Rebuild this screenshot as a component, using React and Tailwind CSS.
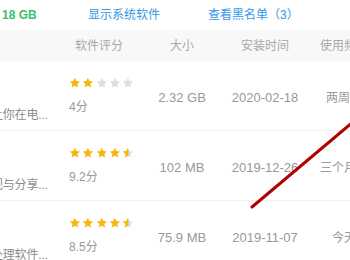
import React from "react";

const ORANGE = "#f8b60f";
const GRAY = "#dedede";
const STAR = "M12 1.5l3.1 6.6 7.2.9-5.3 5 1.4 7.1L12 17.6l-6.4 3.5 1.4-7.1-5.3-5 7.2-.9z";

function Star({ kind, id }) {
  if (kind === "half") {
    return (
      <svg width="12" height="12" viewBox="0 0 24 24">
        <defs>
          <clipPath id={id}>
            <rect x="0" y="0" width="13" height="24" />
          </clipPath>
        </defs>
        <path d={STAR} fill={GRAY} />
        <path d={STAR} fill={ORANGE} clipPath={`url(#${id})`} />
      </svg>
    );
  }
  return (
    <svg width="12" height="12" viewBox="0 0 24 24">
      <path d={STAR} fill={kind === "full" ? ORANGE : GRAY} />
    </svg>
  );
}

function Stars({ value, rid }) {
  const items = [];
  for (let i = 0; i < 5; i++) {
    const v = value - i;
    const kind = v >= 1 ? "full" : v >= 0.5 ? "half" : "empty";
    items.push(<Star key={i} kind={kind} id={`${rid}-${i}`} />);
  }
  return <div className="flex gap-[1.5px] h-[12px]">{items}</div>;
}

const rows = [
  { desc: "让你在电...", stars: 2, score: "4分", size: "2.32 GB", date: "2020-02-18", use: "两周前" },
  { desc: "视与分享...", stars: 4.5, score: "9.2分", size: "102 MB", date: "2019-12-26", use: "三个月前" },
  { desc: "处理软件...", stars: 4.5, score: "8.5分", size: "75.9 MB", date: "2019-11-07", use: "今天" },
];

export default function App() {
  return (
    <div
      className="relative w-[350px] h-[260px] overflow-hidden bg-white"
      style={{ fontFamily: '"Liberation Sans", "Noto Sans CJK SC", sans-serif' }}
    >
      <div className="h-[30px] flex items-center text-[12px] whitespace-nowrap">
        <span className="ml-[2px] w-[86px] font-bold text-[#3cbf6a]">18 GB</span>
        <span className="w-[120px] text-[#3598e8]">显示系统软件</span>
        <span className="text-[#3598e8]">查看黑名单（3）</span>
      </div>
      <div className="w-[400px]">
        <div className="grid grid-cols-[64px_70px_96px_70px_88px] h-[31px] bg-[#f8f8f8] items-center text-[12px] text-[#a8a8a8] whitespace-nowrap">
          <div />
          <div className="text-center">软件评分</div>
          <div className="text-center">大小</div>
          <div className="text-center">安装时间</div>
          <div className="text-center">使用频率</div>
        </div>
        {rows.map((r, i) => (
          <div
            key={i}
            className="grid grid-cols-[64px_70px_96px_70px_88px] h-[70px] border-b border-[#f0f0f0] whitespace-nowrap text-[#999999]"
          >
            <div className="overflow-hidden pt-[46px]">
              <div className="-ml-[9px] text-[12px] leading-[16px] tracking-[-0.2px] text-[#8c8c8c]">{r.desc}</div>
            </div>
            <div className="pl-[5px] pt-[16px]">
              <Stars value={r.stars} rid={`r${i}`} />
              <div className="mt-[10px] text-[12px] leading-[16px]">{r.score}</div>
            </div>
            <div className="text-center pt-[28px] text-[13px] leading-[18px]">{r.size}</div>
            <div className="text-center pt-[28px] text-[13px] leading-[18px]">{r.date}</div>
            <div className="text-center pt-[28px] text-[12px] leading-[18px]">{r.use}</div>
          </div>
        ))}
      </div>
      <svg className="absolute left-0 top-0 pointer-events-none" width="350" height="260">
        <line x1="252" y1="207" x2="353" y2="122" stroke="#b00000" strokeWidth="3" strokeLinecap="round" />
      </svg>
    </div>
  );
}
